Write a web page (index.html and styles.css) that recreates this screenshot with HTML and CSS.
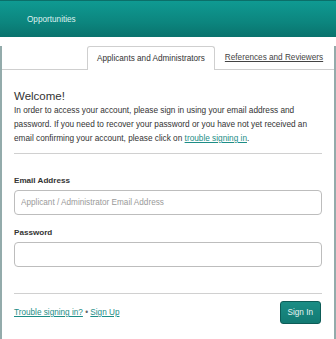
FILE: index.html
```html
<!DOCTYPE html>
<html lang="en">
<head>
<meta charset="utf-8">
<title>Sign In</title>
<link rel="stylesheet" href="styles.css">
</head>
<body>
<div class="page">
  <header class="topbar"><span class="brand">Opportunities</span></header>
  <div class="panel">
    <nav class="tabs">
      <div class="tab tab-active">Applicants and Administrators</div>
      <a class="tab tab-link" href="#">References and Reviewers</a>
    </nav>
    <main class="content">
      <h1 class="title">Welcome!</h1>
      <p class="intro">In order to access your account, please sign in using your email address and password. If you need to recover your password or you have not yet received an email confirming your account, please click on <a class="link" href="#">trouble signing in</a>.</p>
      <hr class="rule">
      <label class="field-label label-first" for="email">Email Address</label>
      <input class="field" id="email" type="text" placeholder="Applicant / Administrator Email Address">
      <label class="field-label" for="password">Password</label>
      <input class="field" id="password" type="password">
      <hr class="rule rule-bottom">
      <div class="footer">
        <div class="footer-links"><a class="link" href="#">Trouble signing in?</a> <span class="dot">&bull;</span> <a class="link" href="#">Sign Up</a></div>
        <button class="btn" type="button">Sign In</button>
      </div>
    </main>
  </div>
</div>
</body>
</html>
```
FILE: styles.css
```css
html, body {
  margin: 0;
  padding: 0;
  background: #ffffff;
}
body {
  font-family: "Liberation Sans", Arial, sans-serif;
  color: #333333;
  width: 336px;
}
.page {
  width: 336px;
}
.topbar {
  height: 37px;
  background: linear-gradient(to bottom, #0f9a92 0%, #0c857e 60%, #0a736d 100%);
  border-top: 1px solid #0b6f69;
  box-sizing: border-box;
  display: flex;
  align-items: center;
  padding-left: 27px;
}
.brand {
  color: #dff1ef;
  font-size: 8.2px;
}
.panel {
  border-left: 2px solid #93abab;
  border-right: 2px solid #93abab;
  border-bottom: 2px solid #93abab;
  border-radius: 0 0 4px 4px;
  height: 300px;
}
.tabs {
  display: flex;
  padding-left: 85px;
  margin-top: 9px;
  border-bottom: 1px solid #cfcfcf;
  height: 23px;
}
.tab {
  font-size: 8.2px;
  line-height: 23px;
  padding: 0 10px;
  height: 23px;
  box-sizing: border-box;
  color: #333333;
}
.tab-active {
  border: 1px solid #cfcfcf;
  border-bottom: none;
  border-radius: 3px 3px 0 0;
  background: #ffffff;
  height: 24px;
  padding: 0 9px;
  line-height: 23px;
}
.tab-link {
  text-decoration: underline;
  color: #444444;
  padding-left: 10px;
}
.content {
  padding: 0 12px;
}
.title {
  font-size: 11.5px;
  font-weight: normal;
  line-height: 14px;
  margin: 19px 0 1px;
  color: #333333;
}
.intro {
  font-size: 8.25px;
  line-height: 14px;
  margin: 0;
  color: #333333;
}
.link {
  color: #1d8d86;
  text-decoration: underline;
}
.rule {
  border: none;
  border-top: 1px solid #d0d0d0;
  margin: 7px 0 0;
  height: 0;
}
.rule-bottom {
  margin-top: 26px;
}
.field-label {
  display: block;
  font-size: 8.1px;
  font-weight: bold;
  line-height: 12px;
  margin-top: 12px;
  color: #333333;
}
.label-first {
  margin-top: 21px;
}
.field {
  display: block;
  box-sizing: border-box;
  width: 100%;
  height: 25px;
  margin: 3px 0 0;
  border: 1px solid #bdbdbd;
  border-radius: 4px;
  padding: 0 6px;
  font-family: "Liberation Sans", Arial, sans-serif;
  font-size: 8.2px;
  color: #333333;
  background: #ffffff;
  outline: none;
}
.field::placeholder {
  color: #9a9a9a;
}
.footer {
  display: flex;
  justify-content: space-between;
  align-items: center;
  margin-top: 7px;
  padding-right: 1px;
}
.footer-links {
  font-size: 8.2px;
  color: #555555;
}
.dot {
  color: #666666;
}
.btn {
  height: 23px;
  padding: 0 7px;
  font-family: "Liberation Sans", Arial, sans-serif;
  font-size: 8.2px;
  color: #e8f4f3;
  background: linear-gradient(to bottom, #1a8d85, #137a73);
  border: 1px solid #0d5c57;
  border-radius: 3px;
}
```
